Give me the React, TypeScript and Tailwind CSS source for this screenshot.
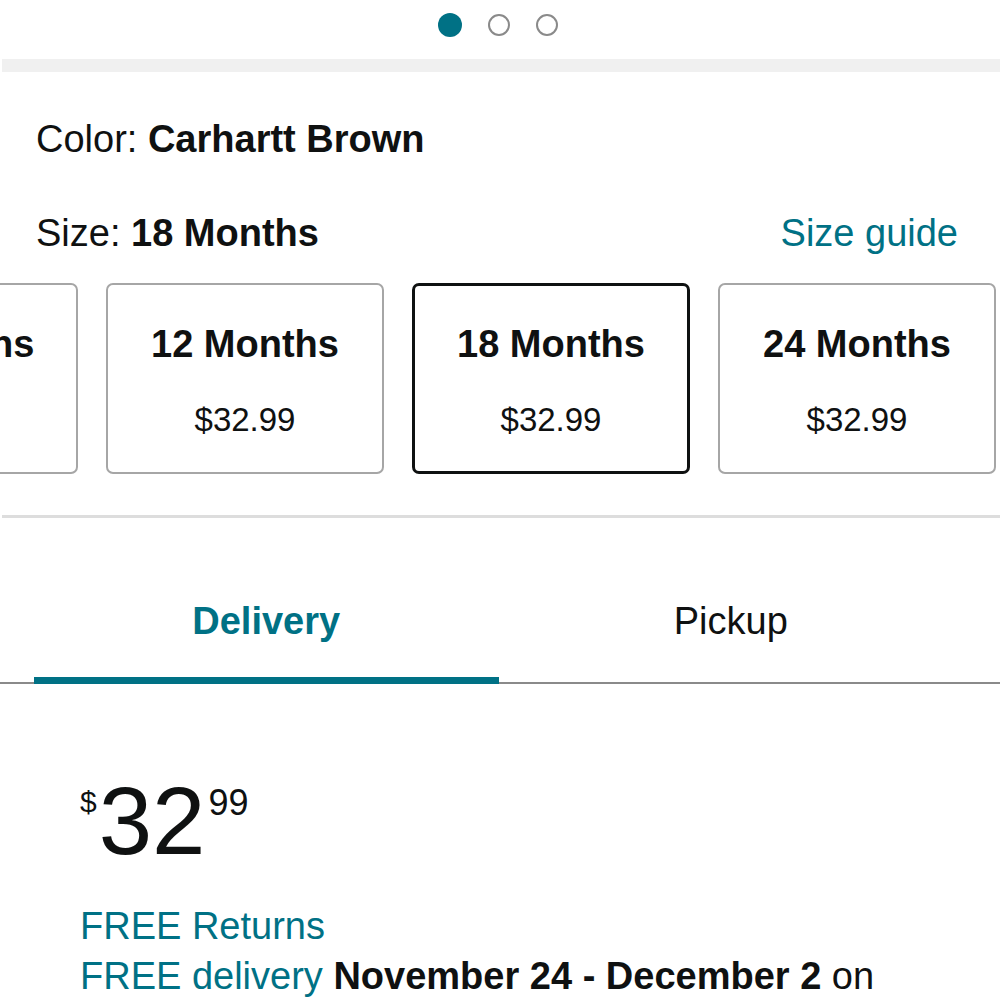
const sizes = [
  { label: '9 Months', price: '$32.99' },
  { label: '12 Months', price: '$32.99' },
  { label: '18 Months', price: '$32.99', selected: true },
  { label: '24 Months', price: '$32.99' },
]

export default function App() {
  return (
    <div
      className="h-[1000px] w-[1000px] overflow-hidden bg-white text-[#0f1111]"
      style={{ fontFamily: '"Liberation Sans", Arial, sans-serif' }}
    >
      {/* carousel dots */}
      <div className="flex h-[50px] items-center justify-center gap-[26px] pr-[4px]">
        <span className="h-[24px] w-[24px] rounded-full bg-[#007185]" />
        <span className="h-[22px] w-[22px] rounded-full border-2 border-[#8a8a8a]" />
        <span className="h-[22px] w-[22px] rounded-full border-2 border-[#8a8a8a]" />
      </div>
      <div className="mt-[9px] ml-[2px] h-[13px] bg-[#f0f0f0]" />

      {/* variation */}
      <div className="px-[36px] pr-[42px]">
        <p className="mt-[48px] text-[38px] leading-none">
          Color: <span className="font-bold">Carhartt Brown</span>
        </p>
        <div className="mt-[56px] flex items-baseline justify-between">
          <p className="text-[38px] leading-none">
            Size: <span className="font-bold">18 Months</span>
          </p>
          <a className="text-[38px] leading-none text-[#007185]">Size guide</a>
        </div>
      </div>

      <div className="mt-[31px] ml-[-200px] flex gap-[28px]">
        {sizes.map((s, i) => (
          <div
            key={s.label}
            className={
              s.selected
                ? 'flex h-[191px] w-[278px] shrink-0 flex-col items-center rounded-[7px] border-[3px] border-[#0f1111] pt-[39px]'
                : 'flex h-[191px] w-[278px] shrink-0 flex-col items-center rounded-[7px] border-2 border-[#a6a6a6] pt-[40px]'
            }
          >
            <span className={i === 0 ? 'ml-[24px] text-[38px] font-bold leading-none' : 'text-[38px] font-bold leading-none'}>
              {s.label}
            </span>
            <span className="mt-[40px] text-[33px] leading-none">{s.price}</span>
          </div>
        ))}
      </div>

      <div className="mt-[41px] ml-[2px] h-[3px] bg-[#dddddd]" />

      {/* delivery / pickup tabs */}
      <div className="mt-[84px] border-b-2 border-[#8a8a8a] px-[34px] pr-[37px]">
        <div className="flex">
          <div className="flex flex-1 flex-col items-center">
            <span className="text-[38px] font-bold leading-none text-[#007185]">Delivery</span>
            <div className="mt-[37px] mb-[-2px] h-[7px] w-full bg-[#007185]" />
          </div>
          <div className="flex flex-1 flex-col items-center">
            <span className="text-[38px] leading-none">Pickup</span>
          </div>
        </div>
      </div>

      {/* price block */}
      <div className="px-[80px]">
        <div className="mt-[89px] flex items-start">
          <span className="mt-[14px] text-[30px] leading-none">$</span>
          <span className="ml-[2px] text-[96px] leading-none">32</span>
          <span className="mt-[12px] ml-[3px] text-[36px] leading-none">99</span>
        </div>
        <div className="mt-[32px] text-[38px] leading-[50px]">
          <p className="text-[#007185]">FREE Returns</p>
          <p>
            <span className="text-[#007185]">FREE delivery</span>{' '}
            <span className="font-bold">November 24 - December 2</span> on
          </p>
        </div>
      </div>
    </div>
  )
}
